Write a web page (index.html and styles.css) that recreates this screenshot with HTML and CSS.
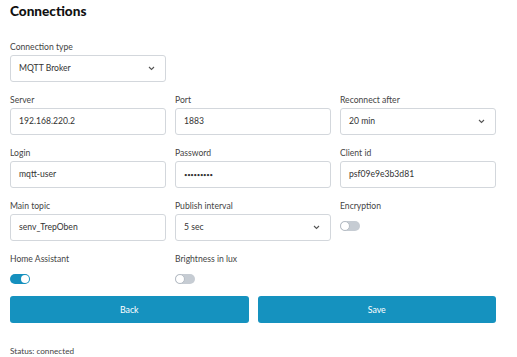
FILE: index.html
```html
<!DOCTYPE html>
<html>
<head>
<meta charset="utf-8">
<link rel="stylesheet" href="styles.css">
</head>
<body>
<div class="page">
  <h1 class="title">Connections</h1>
  <div class="grid">
    <div class="field">
      <label class="label">Connection type</label>
      <div class="box select">MQTT Broker<svg class="chev" width="7" height="5" viewBox="0 0 7 5"><path d="M1 1 L3.5 3.5 L6 1" fill="none" stroke="#555" stroke-width="1.1"/></svg></div>
    </div>
    <div></div><div></div>

    <div class="field">
      <label class="label">Server</label>
      <div class="box">192.168.220.2</div>
    </div>
    <div class="field">
      <label class="label">Port</label>
      <div class="box">1883</div>
    </div>
    <div class="field">
      <label class="label">Reconnect after</label>
      <div class="box select">20 min<svg class="chev" width="7" height="5" viewBox="0 0 7 5"><path d="M1 1 L3.5 3.5 L6 1" fill="none" stroke="#555" stroke-width="1.1"/></svg></div>
    </div>

    <div class="field">
      <label class="label">Login</label>
      <div class="box">mqtt-user</div>
    </div>
    <div class="field">
      <label class="label">Password</label>
      <div class="box pw">•••••••••</div>
    </div>
    <div class="field">
      <label class="label">Client id</label>
      <div class="box">psf09e9e3b3d81</div>
    </div>

    <div class="field">
      <label class="label">Main topic</label>
      <div class="box">senv_TrepOben</div>
    </div>
    <div class="field">
      <label class="label">Publish interval</label>
      <div class="box select">5 sec<svg class="chev" width="7" height="5" viewBox="0 0 7 5"><path d="M1 1 L3.5 3.5 L6 1" fill="none" stroke="#555" stroke-width="1.1"/></svg></div>
    </div>
    <div class="field">
      <label class="label">Encryption</label>
      <span class="toggle off"></span>
    </div>

    <div class="field">
      <label class="label">Home Assistant</label>
      <span class="toggle on"></span>
    </div>
    <div class="field">
      <label class="label">Brightness in lux</label>
      <span class="toggle off"></span>
    </div>
    <div></div>
  </div>
  <div class="buttons">
    <button class="btn">Back</button>
    <button class="btn">Save</button>
  </div>
  <div class="status">Status: connected</div>
</div>
</body>
</html>
```
FILE: styles.css
```css
html, body {
  margin: 0;
  padding: 0;
  background: #fff;
}
body {
  font-family: "Lato", "Noto Sans", sans-serif;
  color: #333;
}
.page {
  width: 486px;
  padding: 0 21px 0 10px;
}
.title {
  margin: 0;
  font-size: 13.6px;
  line-height: 22px;
  font-weight: 900;
  color: #111;
}
.grid {
  margin-top: 19px;
  display: grid;
  grid-template-columns: repeat(3, 156px);
  column-gap: 9px;
  row-gap: 12px;
}
.field {
  display: flex;
  flex-direction: column;
  align-items: flex-start;
}
.label {
  font-size: 8.6px;
  line-height: 13px;
  color: #444;
  margin-bottom: 1px;
}
.box {
  box-sizing: border-box;
  width: 100%;
  height: 27px;
  border: 1px solid #d3d7dc;
  border-radius: 3px;
  padding: 0 8px;
  font-size: 8.6px;
  line-height: 25px;
  color: #333;
  display: flex;
  align-items: center;
  justify-content: space-between;
}
.pw {
  font-size: 6px;
  letter-spacing: -0.3px;
}
.chev {
  margin-right: 2px;
}
.toggle {
  position: relative;
  display: block;
  width: 20px;
  height: 10px;
  border-radius: 5px;
  margin-top: 7px;
  box-sizing: border-box;
}
.toggle::after {
  content: "";
  position: absolute;
  top: 1px;
  width: 8px;
  height: 8px;
  border-radius: 50%;
  background: #fff;
  box-sizing: border-box;
}
.toggle.on {
  background: #1590be;
}
.toggle.on::after {
  right: 1px;
}
.toggle.off {
  background: #c6ccd3;
}
.toggle.off::after {
  left: 0;
  top: 0;
  width: 10px;
  height: 10px;
  border: 1px solid #b5bcc4;
}
.buttons {
  margin-top: 12px;
  display: grid;
  grid-template-columns: 1fr 1fr;
  column-gap: 9px;
}
.btn {
  height: 27px;
  border: none;
  border-radius: 3px;
  background: #1592bf;
  color: #fff;
  font-family: "Lato", "Noto Sans", sans-serif;
  font-size: 8.8px;
  padding: 0;
}
.status {
  margin-top: 22px;
  font-size: 8.2px;
  line-height: 12px;
  color: #444;
}
```
